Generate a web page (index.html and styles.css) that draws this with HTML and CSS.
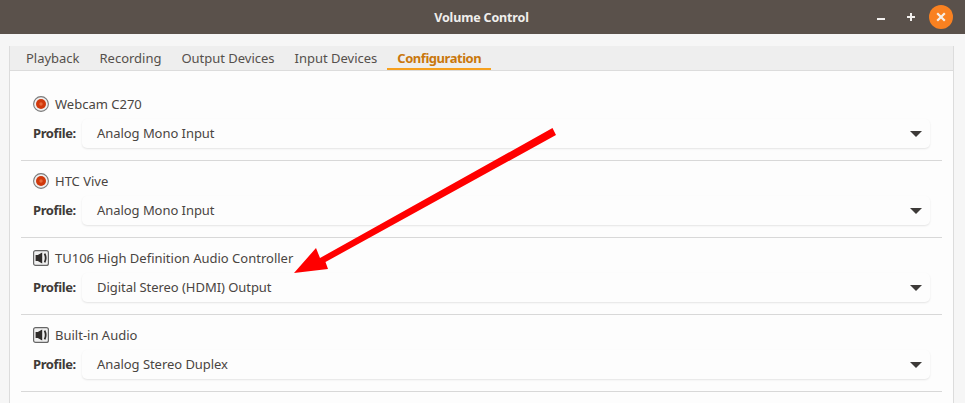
FILE: index.html
```html
<!DOCTYPE html>
<html lang="en">
<head>
<meta charset="utf-8">
<title>Volume Control</title>
<link rel="stylesheet" href="styles.css">
</head>
<body>
<header class="titlebar">
  <span class="title">Volume Control</span>
  <div class="controls">
    <span class="minimize"></span>
    <svg class="maximize" width="10" height="10" viewBox="0 0 10 10"><path d="M5 1v8M1 5h8" stroke="#f2f0ee" stroke-width="2"/></svg>
    <span class="close"><svg width="10" height="10" viewBox="0 0 10 10"><path d="M1.2 1.2l7.6 7.6M8.8 1.2L1.2 8.8" stroke="#f7efe6" stroke-width="2.2"/></svg></span>
  </div>
</header>
<main class="window">
  <div class="notebook">
    <nav class="tabs">
      <span class="tab">Playback</span>
      <span class="tab">Recording</span>
      <span class="tab">Output Devices</span>
      <span class="tab">Input Devices</span>
      <span class="tab active">Configuration</span>
    </nav>
    <div class="cards">
      <section class="card">
        <div class="device">
          <svg class="icon" width="16" height="16" viewBox="0 0 16 16"><circle cx="8" cy="8" r="7.4" fill="#f0f0f0" stroke="#7a7a7a" stroke-width="1.1"/><circle cx="8" cy="8" r="5" fill="#d0390c"/><circle cx="8" cy="8" r="1.7" fill="#e8693a"/></svg>
          <span>Webcam C270</span>
        </div>
        <div class="profile"><span class="label">Profile:</span><div class="combo"><span class="value">Analog Mono Input</span><i class="caret"></i></div></div>
      </section>
      <section class="card">
        <div class="device">
          <svg class="icon" width="16" height="16" viewBox="0 0 16 16"><circle cx="8" cy="8" r="7.4" fill="#f0f0f0" stroke="#7a7a7a" stroke-width="1.1"/><circle cx="8" cy="8" r="5" fill="#d0390c"/><circle cx="8" cy="8" r="1.7" fill="#e8693a"/></svg>
          <span>HTC Vive</span>
        </div>
        <div class="profile"><span class="label">Profile:</span><div class="combo"><span class="value">Analog Mono Input</span><i class="caret"></i></div></div>
      </section>
      <section class="card">
        <div class="device">
          <svg class="icon" width="16" height="16" viewBox="0 0 16 16"><rect x=".6" y=".6" width="14.8" height="14.8" rx="2" fill="#f0f0f0" stroke="#666" stroke-width="1.2"/><path d="M2.6 5h2.2L9.2 2.6v10.8L4.8 11H2.6z" fill="#2f2c2a"/><path d="M11.6 3.6q2.2 4.4 0 8.8" fill="none" stroke="#2f2c2a" stroke-width="1.8"/></svg>
          <span>TU106 High Definition Audio Controller</span>
        </div>
        <div class="profile"><span class="label">Profile:</span><div class="combo"><span class="value">Digital Stereo (HDMI) Output</span><i class="caret"></i></div></div>
      </section>
      <section class="card">
        <div class="device">
          <svg class="icon" width="16" height="16" viewBox="0 0 16 16"><rect x=".6" y=".6" width="14.8" height="14.8" rx="2" fill="#f0f0f0" stroke="#666" stroke-width="1.2"/><path d="M2.6 5h2.2L9.2 2.6v10.8L4.8 11H2.6z" fill="#2f2c2a"/><path d="M11.6 3.6q2.2 4.4 0 8.8" fill="none" stroke="#2f2c2a" stroke-width="1.8"/></svg>
          <span>Built-in Audio</span>
        </div>
        <div class="profile"><span class="label">Profile:</span><div class="combo"><span class="value">Analog Stereo Duplex</span><i class="caret"></i></div></div>
      </section>
    </div>
  </div>
</main>
<svg class="arrow" width="965" height="403" viewBox="0 0 965 403"><polygon points="552.5,128 556,135 325.5,262 328,269 294,273 316,248 320,258" fill="#ff0000"/></svg>
</body>
</html>
```
FILE: styles.css
```css
html, body {
  margin: 0;
  padding: 0;
  height: 403px;
  overflow: hidden;
  background: #f6f6f6;
  font-family: "Noto Sans", "Open Sans", sans-serif;
  font-size: 13px;
  color: #4a4542;
}
.titlebar {
  position: relative;
  height: 34px;
  background: #5a514b;
  display: flex;
  align-items: center;
  justify-content: center;
}
.title {
  color: #f0eeec;
  font-weight: 700;
  font-size: 12.5px;
  letter-spacing: -0.15px;
  margin-right: 2px;
}
.controls {
  position: absolute;
  right: 0;
  top: 0;
  height: 34px;
  display: flex;
  align-items: center;
}
.minimize {
  width: 8px;
  height: 2px;
  background: #f2f0ee;
  margin-top: 3px;
  margin-right: 21px;
}
.maximize {
  margin-right: 13px;
}
.close {
  width: 24px;
  height: 24px;
  border-radius: 50%;
  background: #f98120;
  display: flex;
  align-items: center;
  justify-content: center;
  margin-right: 12px;
}
.window {
  padding: 12px 11px 0 9px;
}
.notebook {
  background: #fdfdfd;
  border-left: 1px solid #dcdcdc;
  border-right: 1px solid #dcdcdc;
  height: 357px;
}
.tabs {
  height: 24px;
  background: #eeeeee;
  border-bottom: 1px solid #dcdcdc;
  display: flex;
  padding-left: 6px;
}
.tab {
  padding: 0 10px;
  line-height: 24px;
  color: #55504c;
  letter-spacing: -0.012px;
}
.tab.active {
  color: #c9770c;
  font-weight: 700;
  letter-spacing: -0.46px;
  box-shadow: inset 0 -2px 0 #f6a01e;
}
.cards {
  padding: 0 11px;
  display: flex;
  flex-direction: column;
}
.card {
  box-sizing: border-box;
  height: 77px;
  padding-top: 9px;
  border-bottom: 1px solid #d8d8d8;
}
.card:first-child {
  height: 90px;
  padding-top: 22px;
}
.device {
  height: 22px;
  display: flex;
  align-items: center;
  gap: 6px;
  padding-left: 12px;
}
.icon {
  flex: none;
}
.profile {
  display: flex;
  align-items: center;
  padding-left: 12px;
  padding-right: 12px;
  margin-top: 4px;
}
.label {
  width: 49px;
  flex: none;
  font-weight: 700;
  color: #3f3b38;
  letter-spacing: -0.4px;
  padding-bottom: 2px;
}
.combo {
  flex: 1;
  height: 29px;
  background: #fdfdfd;
  border-radius: 5px;
  box-shadow: 0 1px 2px rgba(0, 0, 0, 0.1);
  display: flex;
  align-items: center;
  justify-content: space-between;
  padding: 0 8px 0 15px;
  letter-spacing: -0.05px;
}
.value {
  padding-bottom: 2px;
}
.caret {
  width: 0;
  height: 0;
  border-left: 6px solid transparent;
  border-right: 6px solid transparent;
  border-top: 6px solid #3d3a38;
}
.arrow {
  position: absolute;
  left: 0;
  top: 0;
  pointer-events: none;
}
```
